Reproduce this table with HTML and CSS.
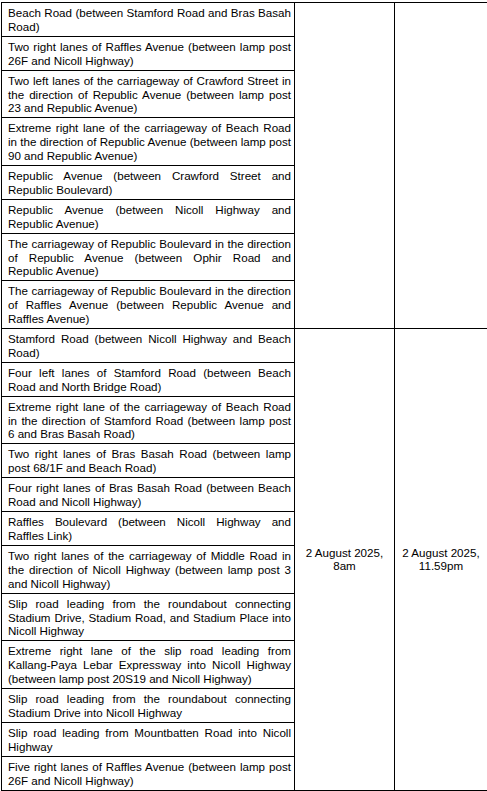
FILE: index.html
```html
<!DOCTYPE html>
<html>
<head>
<meta charset="utf-8">
<link rel="stylesheet" href="styles.css">
</head>
<body>
<table class="closures">
  <colgroup>
    <col class="c-road">
    <col class="c-start">
    <col class="c-end">
  </colgroup>
  <tbody>
    <tr><td class="road">Beach Road (between Stamford Road and Bras Basah Road)</td><td class="date" rowspan="8"></td><td class="date" rowspan="8"></td></tr>
    <tr><td class="road">Two right lanes of Raffles Avenue (between lamp post 26F and Nicoll Highway)</td></tr>
    <tr><td class="road">Two left lanes of the carriageway of Crawford Street in the direction of Republic Avenue (between lamp post 23 and Republic Avenue)</td></tr>
    <tr><td class="road">Extreme right lane of the carriageway of Beach Road in the direction of Republic Avenue (between lamp post 90 and Republic Avenue)</td></tr>
    <tr><td class="road">Republic Avenue (between Crawford Street and Republic Boulevard)</td></tr>
    <tr><td class="road">Republic Avenue (between Nicoll Highway and Republic Avenue)</td></tr>
    <tr><td class="road">The carriageway of Republic Boulevard in the direction of Republic Avenue (between Ophir Road and Republic Avenue)</td></tr>
    <tr><td class="road">The carriageway of Republic Boulevard in the direction of Raffles Avenue (between Republic Avenue and Raffles Avenue)</td></tr>
    <tr><td class="road">Stamford Road (between Nicoll Highway and Beach Road)</td><td class="date" rowspan="12">2 August 2025,<br>8am</td><td class="date" rowspan="12">2 August 2025,<br>11.59pm</td></tr>
    <tr><td class="road">Four left lanes of Stamford Road (between Beach Road and North Bridge Road)</td></tr>
    <tr><td class="road">Extreme right lane of the carriageway of Beach Road in the direction of Stamford Road (between lamp post 6 and Bras Basah Road)</td></tr>
    <tr><td class="road">Two right lanes of Bras Basah Road (between lamp post 68/1F and Beach Road)</td></tr>
    <tr><td class="road">Four right lanes of Bras Basah Road (between Beach Road and Nicoll Highway)</td></tr>
    <tr><td class="road">Raffles Boulevard (between Nicoll Highway and Raffles Link)</td></tr>
    <tr><td class="road">Two right lanes of the carriageway of Middle Road in the direction of Nicoll Highway (between lamp post 3 and Nicoll Highway)</td></tr>
    <tr><td class="road">Slip road leading from the roundabout connecting Stadium Drive, Stadium Road, and Stadium Place into Nicoll Highway</td></tr>
    <tr><td class="road">Extreme right lane of the slip road leading from Kallang-Paya Lebar Expressway into Nicoll Highway (between lamp post 20S19 and Nicoll Highway)</td></tr>
    <tr><td class="road">Slip road leading from the roundabout connecting Stadium Drive into Nicoll Highway</td></tr>
    <tr><td class="road">Slip road leading from Mountbatten Road into Nicoll Highway</td></tr>
    <tr><td class="road">Five right lanes of Raffles Avenue (between lamp post 26F and Nicoll Highway)</td></tr>
  </tbody>
</table>
</body>
</html>
```
FILE: styles.css
```css
html, body {
  margin: 0;
  padding: 0;
  background: #ffffff;
}
body {
  padding: 2px 0 0 1px;
  font-family: "Liberation Sans", Arial, sans-serif;
  font-size: 11.6px;
  color: #000000;
}
.closures {
  border-collapse: collapse;
  table-layout: fixed;
  width: 486px;
}
.c-road { width: 293px; }
.c-start { width: 100px; }
.c-end { width: 93px; }
.closures td {
  border: 1px solid #000000;
  line-height: 13.7px;
  vertical-align: top;
}
.road {
  padding: 3px 3px 2.5px 6px;
  text-align: justify;
}
.date {
  padding: 0 4px;
  text-align: center;
  vertical-align: middle !important;
}
```
